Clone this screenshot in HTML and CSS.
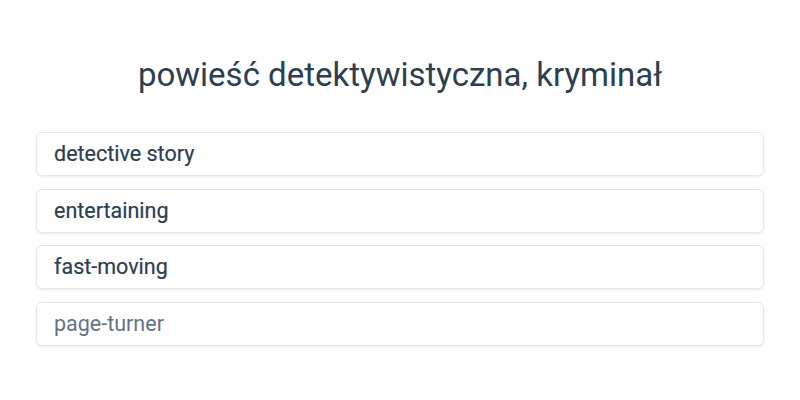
FILE: index.html
```html
<html>
  <head>
    <link rel="stylesheet" href="styles.css">
  </head>
  <body>
    <div class="quiz">
      <h2 class="prompt">powieść detektywistyczna, kryminał</h2>
      <div class="options">
        <div class="option">detective story</div>
        <div class="option">entertaining</div>
        <div class="option">fast-moving</div>
        <div class="option faded">page-turner</div>
      </div>
    </div>
  </body>
</html>
```

FILE: styles.css
```css
body {
  margin: 0;
  background-color: #ffffff;
  font-family: Roboto, "Liberation Sans", sans-serif;
  color: #2c3e50;
}

.quiz {
  padding: 54px 36px 0 36px;
}

.prompt {
  margin: 0 0 36px 0;
  text-align: center;
  font-size: 33px;
  font-weight: 400;
  line-height: 42px;
  color: #2c3e50;
}

.options {
  display: flex;
  flex-direction: column;
  gap: 12.6px;
}

.option {
  height: 42px;
  line-height: 42px;
  padding: 0 17px;
  border: 1px solid #e4e6e9;
  border-radius: 6px;
  box-shadow: 0 1px 3px rgba(0, 0, 0, 0.08);
  font-size: 21.5px;
  font-weight: 400;
  -webkit-text-stroke: 0.2px #2c3e50;
  color: #2c3e50;
  background-color: #ffffff;
}

.faded {
  color: #627386;
  -webkit-text-stroke: 0;
}
```
